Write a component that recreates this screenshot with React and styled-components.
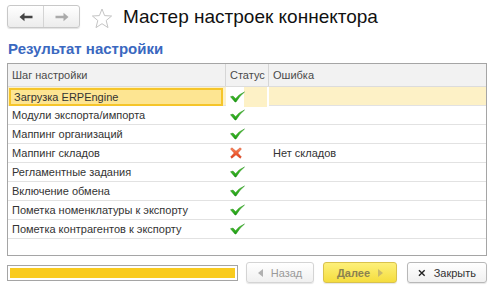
import styled, { createGlobalStyle } from 'styled-components'

const GlobalStyle = createGlobalStyle`
  html, body {
    margin: 0;
    padding: 0;
    background: #fff;
  }
  body {
    font-family: Arial, "Liberation Sans", sans-serif;
    font-size: 11px;
    color: #333;
  }
`;

const steps = [
  { name: 'Загрузка ERPEngine', ok: true, error: '' },
  { name: 'Модули экспорта/импорта', ok: true, error: '' },
  { name: 'Маппинг организаций', ok: true, error: '' },
  { name: 'Маппинг складов', ok: false, error: 'Нет складов' },
  { name: 'Регламентные задания', ok: true, error: '' },
  { name: 'Включение обмена', ok: true, error: '' },
  { name: 'Пометка номенклатуры к экспорту', ok: true, error: '' },
  { name: 'Пометка контрагентов к экспорту', ok: true, error: '' },
];

function CheckIcon() {
  return (
    <svg width="15" height="12" viewBox="0 0 15 11">
      <defs>
        <linearGradient id="chk" x1="0" y1="0" x2="0" y2="1">
          <stop offset="0" stopColor="#5fd23a" />
          <stop offset="1" stopColor="#1a9a12" />
        </linearGradient>
      </defs>
      <path d="M0.5 5.2 L3 4.6 L5.6 7.2 Q9 2.6 14.5 0.5 Q9.6 4.2 6 10.5 L5 10.5 Z" fill="url(#chk)" stroke="#1f8a18" strokeWidth="0.5" strokeLinejoin="round" />
    </svg>
  )
}

function CrossIcon() {
  return (
    <svg width="12" height="12" viewBox="0 0 12 12">
      <defs>
        <linearGradient id="crs" x1="0" y1="0" x2="0" y2="1">
          <stop offset="0" stopColor="#ff8a5c" />
          <stop offset="1" stopColor="#e03a14" />
        </linearGradient>
      </defs>
      <path d="M1.8 0.8 L6 4.2 L10.2 0.8 L11.4 2 L7.8 6 L11.4 10 L10.2 11.2 L6 7.8 L1.8 11.2 L0.6 10 L4.2 6 L0.6 2 Z" fill="url(#crs)" stroke="#c9401c" strokeWidth="0.5" strokeLinejoin="round" />
    </svg>
  )
}

function StarIcon() {
  return (
    <svg width="22" height="21" viewBox="0 0 22 21">
      <path d="M11 1 L13.6 7.6 L20.6 8 L15.2 12.5 L17 19.6 L11 15.7 L5 19.6 L6.8 12.5 L1.4 8 L8.4 7.6 Z" fill="none" stroke="#c4c4c4" strokeWidth="1" strokeLinejoin="round" />
    </svg>
  )
}

function App() {
  return (
    <>
      <GlobalStyle />
      <Window>
        <TopBar>
          <NavGroup>
            <NavButton>
              <svg width="14" height="10" viewBox="0 0 14 10">
                <path d="M0.5 5 L5.5 0.8 L5.5 3.8 L13.5 3.8 L13.5 6.2 L5.5 6.2 L5.5 9.2 Z" fill="#444" />
              </svg>
            </NavButton>
            <NavButton>
              <svg width="14" height="10" viewBox="0 0 14 10">
                <path d="M13.5 5 L8.5 0.8 L8.5 3.8 L0.5 3.8 L0.5 6.2 L8.5 6.2 L8.5 9.2 Z" fill="#aaa" />
              </svg>
            </NavButton>
          </NavGroup>
          <StarIcon />
          <Title>Мастер настроек коннектора</Title>
        </TopBar>

        <Heading>Результат настройки</Heading>

        <Table>
          <HeaderRow>
            <HeadCell>Шаг настройки</HeadCell>
            <HeadCell>Статус</HeadCell>
            <HeadCell last>Ошибка</HeadCell>
          </HeaderRow>
          {steps.map((step, index) => (
            <Row key={index} selected={index === 0}>
              <NameCell selected={index === 0}>{step.name}</NameCell>
              <StatusCell selected={index === 0}>
                {step.ok ? <CheckIcon /> : <CrossIcon />}
              </StatusCell>
              <ErrorCell>{step.error}</ErrorCell>
            </Row>
          ))}
        </Table>

        <Footer>
          <Progress>
            <ProgressFill />
          </Progress>
          <Button disabled>
            <Tri left />
            Назад
          </Button>
          <Button primary>
            Далее
            <Tri />
          </Button>
          <Button>
            <svg width="12" height="12" viewBox="0 0 12 12">
              <path d="M1.5 1.5 L10.5 10.5 M10.5 1.5 L1.5 10.5" stroke="#222" strokeWidth="2.2" />
            </svg>
            Закрыть
          </Button>
        </Footer>
      </Window>
    </>
  )
}

const Window = styled.div`
  width: 497px;
  height: 302px;
  padding: 5px 10px 0 7px;
  box-sizing: border-box;
  display: flex;
  flex-direction: column;
`;

const TopBar = styled.div`
  display: flex;
  align-items: center;
  height: 23px;
  svg { flex-shrink: 0; }
  & > svg {
    margin-left: 11px;
    margin-top: 3px;
  }
`;

const NavGroup = styled.div`
  display: flex;
  width: 73px;
  height: 23px;
  box-sizing: border-box;
  border: 1px solid #c8c8c8;
  border-radius: 3px;
  background: linear-gradient(#ffffff, #ececec);
  box-shadow: 0 1px 1px rgba(0, 0, 0, 0.12);
`;

const NavButton = styled.div`
  flex: 1;
  display: flex;
  align-items: center;
  justify-content: center;
  & + & {
    border-left: 1px solid #d4d4d4;
  }
`;

const Title = styled.div`
  margin-left: 10px;
  font-size: 19px;
  color: #111;
  line-height: 23px;
`;

const Heading = styled.div`
  margin-top: 12px;
  margin-left: 1px;
  font-size: 15px;
  font-weight: bold;
  color: #3a68c0;
  line-height: 17px;
`;

const Table = styled.div`
  margin-top: 6px;
  width: 480px;
  height: 193px;
  box-sizing: border-box;
  border: 1px solid #a5a5a5;
  background: #fff;
`;

const HeaderRow = styled.div`
  display: grid;
  grid-template-columns: 218px 43px 1fr;
  height: 22px;
  background: #f2f2f2;
  border-bottom: 1px solid #dcdcdc;
`;

const HeadCell = styled.div`
  padding-left: 4px;
  line-height: 22px;
  color: #4a4a4a;
  border-right: ${p => (p.last ? 'none' : '1px solid #d6d6d6')};
`;

const Row = styled.div`
  display: grid;
  grid-template-columns: 218px 43px 1fr;
  height: 19px;
  box-sizing: border-box;
  border-bottom: 1px solid #e2e2e2;
  background: ${p => (p.selected ? '#fdf1c6' : '#fff')};
`;

const NameCell = styled.div`
  box-sizing: border-box;
  padding-left: ${p => (p.selected ? '3px' : '4px')};
  line-height: ${p => (p.selected ? '14px' : '18px')};
  white-space: nowrap;
  color: #333;
  ${p => p.selected && `
    margin: 1px 3px 1px 1px;
    border: 2px solid #f5c52a;
    background: #fde592;
  `}
`;

const StatusCell = styled.div`
  display: flex;
  align-items: center;
  padding-left: 4px;
  ${p => p.selected && `
    background: linear-gradient(to right, #fff 0, #fff 18px, #fdf1c6 18px);
    border-right: 2px solid #fff;
  `}
`;

const ErrorCell = styled.div`
  padding-left: 4px;
  line-height: 18px;
  color: #333;
`;

const Footer = styled.div`
  display: flex;
  align-items: center;
  margin-top: 6px;
  height: 21px;
`;

const Progress = styled.div`
  width: 231px;
  height: 16px;
  box-sizing: border-box;
  border: 1px solid #a5a5a5;
  padding: 2px;
  margin-right: 8px;
`;

const ProgressFill = styled.div`
  height: 100%;
  background: #f9cb1f;
`;

const Button = styled.div`
  display: flex;
  align-items: center;
  justify-content: center;
  gap: 8px;
  height: 21px;
  box-sizing: border-box;
  padding: 0 10px;
  margin-right: 9px;
  border-radius: 3px;
  font-size: 11px;
  border: 1px solid ${p => (p.primary ? '#d9c24c' : p.disabled ? '#d4d4d4' : '#b8b8b8')};
  background: ${p => (p.primary ? 'linear-gradient(#fdf07a, #f5dd3e)' : 'linear-gradient(#ffffff, #f0f0f0)')};
  color: ${p => (p.primary ? '#8a8150' : p.disabled ? '#9a9a9a' : '#333')};
  font-weight: ${p => (p.primary ? 'bold' : 'normal')};
  box-shadow: 0 1px 1px rgba(0, 0, 0, 0.1);
  width: ${p => (p.primary ? '74px' : p.disabled ? '68px' : '80px')};
  &:last-child { margin-right: 0; margin-left: 1px; }
`;

const Tri = styled.span`
  width: 0;
  height: 0;
  border-top: 4px solid transparent;
  border-bottom: 4px solid transparent;
  ${p => (p.left
    ? 'border-right: 5px solid #b0b0b0;'
    : 'border-left: 5px solid #c9b96a;')}
`;

export default App
